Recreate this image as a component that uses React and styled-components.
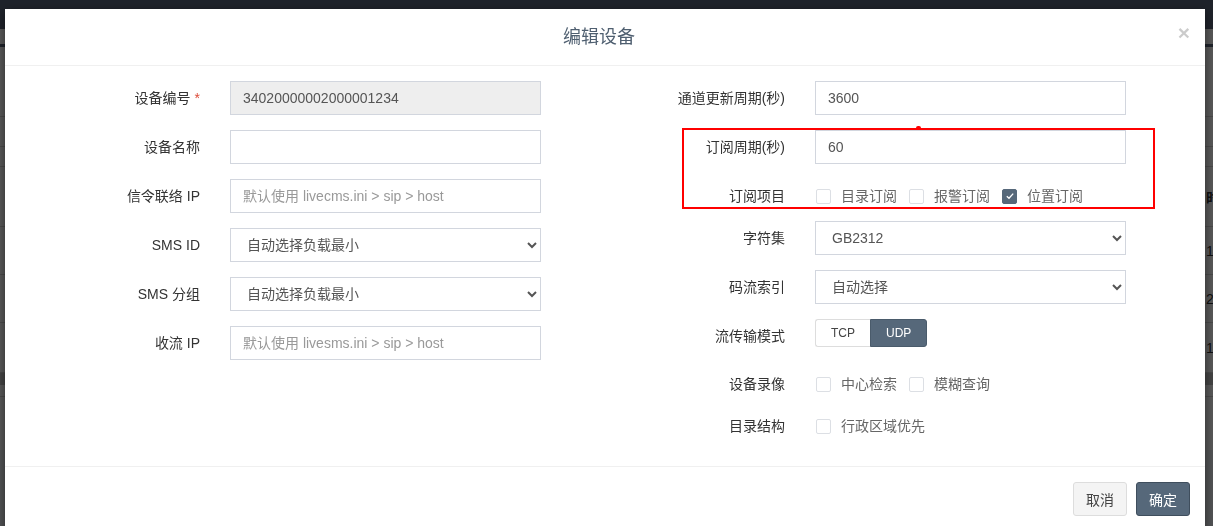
import styled, { createGlobalStyle } from "styled-components";

const GlobalStyle = createGlobalStyle`
   html, body {
      margin: 0;
      padding: 0;
      height: 100%;
      overflow: hidden;
   }
   body {
      font-family: "Liberation Sans", "Noto Sans CJK SC", sans-serif;
      font-size: 14px;
      color: #333;
      background: #ecf0f5;
   }
   * {
      box-sizing: border-box;
   }
`;

const PRIMARY = "#56687a";

/* ---------- page behind the dialog ---------- */

const Page = styled.div`
   height: 526px;
   background: #ecf0f5;
`;

const Navbar = styled.div`
   height: 29px;
   background: #5a657b;
`;

const SubNav = styled.div`
   height: 18px;
   background: #fdfdfd;
   border-bottom: 3px solid #5a657b;
`;

const Box = styled.div`
   background: #fff;
   height: 403px;
`;

const BoxBand = styled.div`
   height: ${(p) => p.$h}px;
   border-bottom: 1px solid #d4d4d4;
   background: ${(p) => p.$bg || "#fff"};
`;

const TableRow = styled.div`
   display: grid;
   grid-template-columns: 1198px 1fr;
   align-items: center;
   height: ${(p) => p.$h}px;
   border-bottom: 1px solid #d4d4d4;
   white-space: nowrap;
   overflow: hidden;

   span {
      padding: 0 8px;
      color: #333;
      font-weight: ${(p) => (p.$head ? 700 : 400)};
   }
`;

const ScrollBar = styled.div`
   height: 12px;
   background: #c4c4c4;
`;

/* ---------- dialog ---------- */

const Overlay = styled.div`
   position: fixed;
   inset: 0;
   background: rgba(0, 0, 0, 0.66);
   overflow: hidden;
`;

const Modal = styled.div`
   position: relative;
   width: 1200px;
   margin: 9px 0 0 5px;
   background: #fff;
   box-shadow: 0 3px 9px rgba(0, 0, 0, 0.5);
`;

const Header = styled.div`
   position: relative;
   padding: 15px 27px 15px 15px;
   border-bottom: 1px solid #f0f0f0;
   text-align: center;
`;

const Title = styled.h4`
   margin: 0;
   font-size: 18px;
   font-weight: 400;
   line-height: 26px;
   color: #4f5f70;
`;

const CloseBtn = styled.button`
   position: absolute;
   right: 15px;
   top: 13px;
   padding: 0;
   border: 0;
   background: none;
   font-family: "Liberation Sans", sans-serif;
   font-size: 21px;
   font-weight: 700;
   line-height: 1;
   color: #000;
   opacity: 0.2;
   cursor: pointer;
`;

const Body = styled.div`
   position: relative;
   display: grid;
   grid-template-columns: 585px 585px;
   padding: 15px;
`;

const Column = styled.div`
   display: flex;
   flex-direction: column;
`;

const Row = styled.div`
   display: grid;
   grid-template-columns: 165px 311px;
   column-gap: 30px;
   padding-left: 15px;
   margin-bottom: 15px;
`;

const Label = styled.label`
   display: block;
   text-align: right;
   padding-top: 7px;
   line-height: 20px;
   color: #333;
   white-space: nowrap;

   em {
      font-style: normal;
      color: #dd4b39;
      margin-left: 4px;
   }
`;

const Input = styled.input`
   display: block;
   width: 100%;
   height: 34px;
   padding: 6px 12px;
   border: 1px solid #d2d6de;
   border-radius: 0;
   font-family: inherit;
   font-size: 14px;
   color: #555;
   background: ${(p) => (p.disabled ? "#eee" : "#fff")};
   outline: none;

   &::placeholder {
      color: #999;
   }
`;

const Select = styled.select`
   display: block;
   width: 100%;
   height: 34px;
   padding: 6px 12px;
   border: 1px solid #d2d6de;
   border-radius: 0;
   font-family: inherit;
   font-size: 14px;
   color: #555;
   background: #fff;
   outline: none;
`;

const CheckGroup = styled.div`
   display: flex;
   align-items: center;
   padding-top: 7px;
   height: 27px;
   padding-left: 1px;
   gap: 12px;
`;

const CheckItem = styled.label`
   display: flex;
   align-items: center;
   gap: 10px;
   line-height: 20px;
   color: #666;
   white-space: nowrap;
`;

const Box15 = styled.span`
   display: inline-flex;
   align-items: center;
   justify-content: center;
   width: 15px;
   height: 15px;
   border: 1px solid ${(p) => (p.$checked ? PRIMARY : "#dcdfe4")};
   border-radius: 2px;
   background: ${(p) => (p.$checked ? PRIMARY : "#fff")};
`;

const Segment = styled.div`
   display: flex;
   margin-bottom: 5px;
`;

const SegBtn = styled.button`
   height: 28px;
   padding: 0 15px;
   font-family: inherit;
   font-size: 12px;
   border: 1px solid ${(p) => (p.$active ? "#4a5b6b" : "#ddd")};
   background: ${(p) => (p.$active ? PRIMARY : "#fff")};
   color: ${(p) => (p.$active ? "#fff" : "#444")};
   border-radius: ${(p) => (p.$first ? "3px 0 0 3px" : "0 3px 3px 0")};
   ${(p) => (p.$first ? "border-right: 0;" : "")}
`;

const Footer = styled.div`
   display: flex;
   justify-content: flex-end;
   gap: 9px;
   padding: 15px;
   border-top: 1px solid #f0f0f0;
`;

const Button = styled.button`
   height: 34px;
   padding: 6px 12px;
   font-family: inherit;
   font-size: 14px;
   border-radius: 3px;
   border: 1px solid ${(p) => (p.$primary ? "#3f4e5d" : "#ddd")};
   background: ${(p) => (p.$primary ? PRIMARY : "#f4f4f4")};
   color: ${(p) => (p.$primary ? "#fff" : "#444")};
`;

const Annotation = styled.div`
   position: absolute;
   left: 677px;
   top: 119px;
   width: 473px;
   height: 81px;
   border: 2px solid #ff0000;
   pointer-events: none;

   &::before {
      content: "";
      position: absolute;
      left: 232px;
      top: -4px;
      width: 5px;
      height: 4px;
      border-radius: 2px 2px 0 0;
      background: #ff0000;
   }
`;

const Check = ({ checked, children }) => (
   <CheckItem>
      <Box15 $checked={checked}>
         {checked && (
            <svg width="10" height="10" viewBox="0 0 10 10">
               <path d="M1.8 5.2 L4 7.3 L8.2 2.6" fill="none" stroke="#fff" strokeWidth="1.3" />
            </svg>
         )}
      </Box15>
      {children}
   </CheckItem>
);

const Backdrop = () => (
   <Page>
      <Navbar />
      <SubNav />
      <Box>
         <BoxBand $h={70} />
         <BoxBand $h={30} />
         <BoxBand $h={20} />
         <TableRow $h={60} $head>
            <span>编号</span>
            <span>时间</span>
         </TableRow>
         <TableRow $h={48}>
            <span>a</span>
            <span>1</span>
         </TableRow>
         <TableRow $h={48}>
            <span>b</span>
            <span>2</span>
         </TableRow>
         <TableRow $h={50}>
            <span>c</span>
            <span>1</span>
         </TableRow>
         <ScrollBar />
         <BoxBand $h={12} />
      </Box>
   </Page>
);

const App = () => {
   return (
      <>
         <GlobalStyle />
         <Backdrop />
         <Overlay>
            <Modal>
               <Header>
                  <Title>编辑设备</Title>
                  <CloseBtn>×</CloseBtn>
               </Header>
               <Body>
                  <Column>
                     <Row>
                        <Label>
                           设备编号<em>*</em>
                        </Label>
                        <Input disabled defaultValue="34020000002000001234" />
                     </Row>
                     <Row>
                        <Label>设备名称</Label>
                        <Input defaultValue="" />
                     </Row>
                     <Row>
                        <Label>信令联络 IP</Label>
                        <Input placeholder="默认使用 livecms.ini > sip > host" />
                     </Row>
                     <Row>
                        <Label>SMS ID</Label>
                        <Select defaultValue="auto">
                           <option value="auto">自动选择负载最小</option>
                        </Select>
                     </Row>
                     <Row>
                        <Label>SMS 分组</Label>
                        <Select defaultValue="auto">
                           <option value="auto">自动选择负载最小</option>
                        </Select>
                     </Row>
                     <Row>
                        <Label>收流 IP</Label>
                        <Input placeholder="默认使用 livesms.ini > sip > host" />
                     </Row>
                  </Column>
                  <Column>
                     <Row>
                        <Label>通道更新周期(秒)</Label>
                        <Input defaultValue="3600" />
                     </Row>
                     <Row>
                        <Label>订阅周期(秒)</Label>
                        <Input defaultValue="60" />
                     </Row>
                     <Row>
                        <Label>订阅项目</Label>
                        <CheckGroup>
                           <Check>目录订阅</Check>
                           <Check>报警订阅</Check>
                           <Check checked>位置订阅</Check>
                        </CheckGroup>
                     </Row>
                     <Row>
                        <Label>字符集</Label>
                        <Select defaultValue="GB2312">
                           <option value="GB2312">GB2312</option>
                           <option value="UTF-8">UTF-8</option>
                        </Select>
                     </Row>
                     <Row>
                        <Label>码流索引</Label>
                        <Select defaultValue="auto">
                           <option value="auto">自动选择</option>
                        </Select>
                     </Row>
                     <Row>
                        <Label>流传输模式</Label>
                        <Segment>
                           <SegBtn $first>TCP</SegBtn>
                           <SegBtn $active>UDP</SegBtn>
                        </Segment>
                     </Row>
                     <Row>
                        <Label>设备录像</Label>
                        <CheckGroup>
                           <Check>中心检索</Check>
                           <Check>模糊查询</Check>
                        </CheckGroup>
                     </Row>
                     <Row>
                        <Label>目录结构</Label>
                        <CheckGroup>
                           <Check>行政区域优先</Check>
                        </CheckGroup>
                     </Row>
                  </Column>
               </Body>
               <Footer>
                  <Button>取消</Button>
                  <Button $primary>确定</Button>
               </Footer>
               <Annotation />
            </Modal>
         </Overlay>
      </>
   );
};

export default App;
